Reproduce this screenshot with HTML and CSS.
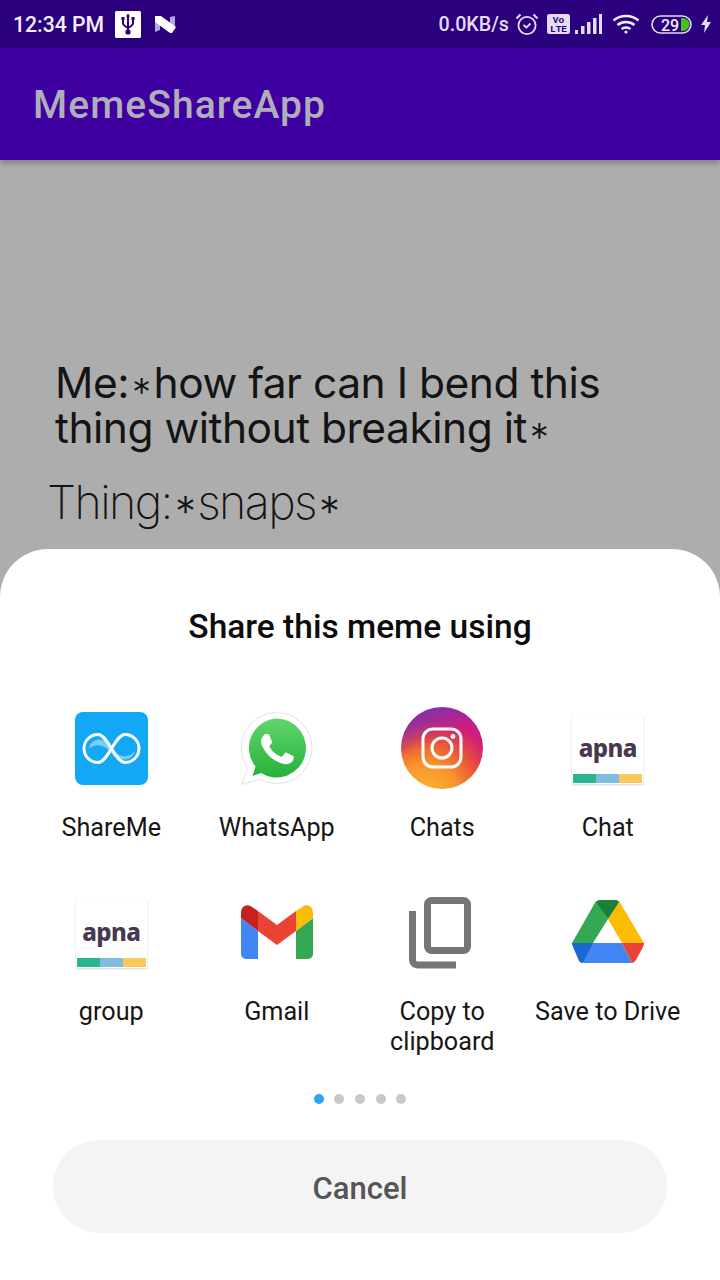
FILE: index.html

```html
<!DOCTYPE html>
<html lang="en">
<head>
  <meta charset="UTF-8">
  <title>MemeShareApp</title>
  <link rel="stylesheet" href="styles.css">
</head>
<body>
  <div class="phone">
    <div class="status-bar">
      <div class="status-left">
        <span class="clock">12:34 PM</span>
        <svg class="usb-icon" viewBox="0 0 26 27">
          <rect width="26" height="27" rx="1.5" fill="#fff"/>
          <path d="M13 4v17M8 8v4q0 2 2 3l3 2 3-2q2-1 2-3V8" fill="none" stroke="#2a007c" stroke-width="2"/>
          <circle cx="13" cy="21" r="2.6" fill="#2a007c"/>
          <rect x="6.500" y="6" width="3" height="3" fill="#2a007c"/>
          <rect x="16.500" y="6" width="3" height="3" fill="#2a007c"/>
          <path d="M13 2.500l2 3h-4z" fill="#2a007c"/>
        </svg>
        <svg class="n-icon" viewBox="0 0 22 18">
          <path d="M1 1l5 1v13l-5 2z" fill="#b5a6dc"/>
          <path d="M16 2l5-1v13l-5 2z" fill="#b5a6dc"/>
          <path d="M1 1h6l15 11-4 6h-2L1 7z" fill="#fff"/>
        </svg>
      </div>
      <div class="status-right">
        <span class="speed">0.0KB/s</span>
        <svg class="alarm-icon" viewBox="0 0 24 24" fill="none" stroke="#e4dcf4" stroke-width="1.8">
          <circle cx="12" cy="13.500" r="8.600"/>
          <path d="M8.500 13l3 2.500 4-4"/>
          <path d="M1.500 6.500l4-4M22.500 6.500l-4-4" stroke-width="2.2"/>
        </svg>
        <svg class="volte-icon" viewBox="0 0 23 20">
          <rect width="23" height="20" rx="2.500" fill="#e4dcf4"/>
          <text x="11.500" y="9" class="volte-text">Vo</text>
          <text x="11.500" y="18" class="volte-text">LTE</text>
        </svg>
        <svg class="signal-icon" viewBox="0 0 27 20" fill="#e4dcf4">
          <rect x="0" y="16" width="3" height="4"/>
          <rect x="6" y="12" width="3.500" height="8"/>
          <rect x="12" y="8" width="3.500" height="12"/>
          <rect x="18" y="4" width="3.500" height="16"/>
          <rect x="24" y="0" width="3" height="20"/>
        </svg>
        <svg class="wifi-icon" viewBox="0 0 28 20" fill="none" stroke="#f1edf9" stroke-width="2.600">
          <path d="M1.500 6.500c7-6 18-6 25 0"/>
          <path d="M5.500 11c5-4 12-4 17 0"/>
          <path d="M9.500 15c3-2 6-2 9 0"/>
          <circle cx="14" cy="18" r="1.600" fill="#f1edf9" stroke="none"/>
        </svg>
        <svg class="battery-icon" viewBox="0 0 42 19">
          <rect x="1" y="1" width="39" height="17" rx="8.500" fill="none" stroke="#e4dcf4" stroke-width="1.600"/>
          <path d="M30 3h2a6.500 6.500 0 0 1 0 13h-2z" fill="#45c01e"/>
          <text x="19" y="15.500" class="battery-text">29</text>
        </svg>
        <svg class="bolt-icon" viewBox="0 0 12 18">
          <path d="M8 0L1 10h4l-1 8 7-11H7z" fill="#e4dcf4"/>
        </svg>
      </div>
    </div>

    <div class="app-bar">MemeShareApp</div>

    <div class="meme">
      <p class="meme-line">Me:<span class="star">*</span>how far can I bend this thing without breaking it<span class="star">*</span></p>
      <p class="meme-thing">Thing:<span class="star">*</span>snaps<span class="star">*</span></p>
    </div>

    <div class="sheet">
      <h2 class="sheet-title">Share this meme using</h2>
      <div class="app-grid">
        <div class="app">
          <div class="app-icon">
            <svg width="73" height="73" viewBox="0 0 73 73">
              <rect width="73" height="73" rx="8" fill="#12a8f6"/>
              <path d="M14 36c2-9 12-11 18-5l5 6c4 4 6 6 10 7 5 1 11-1 13-6-1 8-8 10-13 9.500-6 0-9-4-13-9-5-5-12-8-20-2z" fill="#7accfa"/>
              <path d="M36.500 36.500C32 29 28 22.500 23 22.500c-7.500 0-14 6-14 14s6.500 14 14 14c5 0 9-6.500 13.500-14S45 22.500 50 22.500c7.500 0 14 6 14 14s-6.500 14-14 14c-5 0-9-6.500-13.500-14z" fill="none" stroke="#fff" stroke-width="3"/>
            </svg>
          </div>
          <div class="app-label">ShareMe</div>
        </div>
        <div class="app">
          <div class="app-icon">
            <svg width="73" height="73" viewBox="0 0 72 73">
              <defs>
                <linearGradient id="waGreen" x1="0" y1="0" x2="0" y2="1">
                  <stop offset="0" stop-color="#62d56e"/>
                  <stop offset="1" stop-color="#26b23a"/>
                </linearGradient>
              </defs>
              <path d="M36 0.500a35.500 35.500 0 1 1-17 66.700L1.500 72.500l5.500-16A35.500 35.500 0 0 1 36 0.500z" fill="#fff" stroke="#e2e2e2" stroke-width="1"/>
              <path d="M36 6.500a29.500 29.500 0 1 1-15.500 54.600L12 64l3-9.500A29.500 29.500 0 0 1 36 6.500z" fill="url(#waGreen)"/>
              <g transform="translate(4.400 4.600) scale(2.7)">
                <path d="M17.472 14.382c-.297-.149-1.758-.867-2.03-.967-.273-.099-.471-.148-.67.15-.197.297-.767.966-.94 1.164-.173.199-.347.223-.644.075-.297-.15-1.255-.463-2.39-1.475-.883-.788-1.48-1.761-1.653-2.059-.173-.297-.018-.458.13-.606.134-.133.298-.347.446-.52.149-.174.198-.298.298-.497.099-.198.05-.371-.025-.52-.075-.149-.669-1.612-.916-2.207-.242-.579-.487-.5-.669-.51-.173-.008-.371-.01-.57-.01-.198 0-.52.074-.792.372-.272.297-1.04 1.016-1.04 2.479 0 1.462 1.065 2.875 1.213 3.074.149.198 2.096 3.2 5.077 4.487.709.306 1.262.489 1.694.625.712.227 1.36.195 1.871.118.571-.085 1.758-.719 2.006-1.413.248-.694.248-1.289.173-1.413-.074-.124-.272-.198-.57-.347z" fill="#fff"/>
              </g>
            </svg>
          </div>
          <div class="app-label">WhatsApp</div>
        </div>
        <div class="app">
          <div class="app-icon">
            <div class="insta">
              <svg width="82" height="82" viewBox="0 0 82 82" fill="none" stroke="#fff">
                <rect x="22" y="22" width="38" height="38" rx="10" stroke-width="3"/>
                <circle cx="41" cy="41" r="10" stroke-width="3"/>
                <circle cx="52" cy="29.500" r="2.400" fill="#fff" stroke="none"/>
              </svg>
            </div>
          </div>
          <div class="app-label">Chats</div>
        </div>
        <div class="app">
          <div class="app-icon">
            <div class="apna">
              <span class="apna-name">apna</span>
              <div class="apna-bars"><i class="bar-green"></i><i class="bar-blue"></i><i class="bar-yellow"></i></div>
            </div>
          </div>
          <div class="app-label">Chat</div>
        </div>

        <div class="app">
          <div class="app-icon">
            <div class="apna">
              <span class="apna-name">apna</span>
              <div class="apna-bars"><i class="bar-green"></i><i class="bar-blue"></i><i class="bar-yellow"></i></div>
            </div>
          </div>
          <div class="app-label">group</div>
        </div>
        <div class="app">
          <div class="app-icon">
            <svg width="72" height="54" viewBox="0 0 72 54">
              <path d="M0 13l17 13v28H5a5 5 0 0 1-5-5z" fill="#4285f4"/>
              <path d="M55 26l17-13v36a5 5 0 0 1-5 5H55z" fill="#34a853"/>
              <path d="M55 6l6-4c5-4 11-1 11 6v5L55 26z" fill="#fbbc04"/>
              <path d="M0 13V8C0 1 6-2 11 2l6 4v20z" fill="#c5221f"/>
              <path d="M17 6l19 14L55 6v20L36 40 17 26z" fill="#ea4335"/>
            </svg>
          </div>
          <div class="app-label">Gmail</div>
        </div>
        <div class="app">
          <div class="app-icon">
            <svg class="copy-icon" width="62" height="72" viewBox="0 0 62 72" fill="none" stroke="#757575" stroke-width="7">
              <rect x="18.500" y="3.500" width="40" height="50" rx="4"/>
              <path d="M3.500 14v49a5 5 0 0 0 5 5H47"/>
            </svg>
          </div>
          <div class="app-label">Copy to clipboard</div>
        </div>
        <div class="app">
          <div class="app-icon">
            <svg width="72" height="64" viewBox="0 0 72 64">
              <path d="M24 1L36 19 21 43H0z" fill="#34a853"/>
              <path d="M47 1l25 42H50L36 19z" fill="#fbbc04"/>
              <path d="M24 2q1-2 4-2h16q2 0 3 2L36 19z" fill="#188038"/>
              <path d="M0 43h22L11 63q-3 0-4-2L1 47q-1-2-1-4z" fill="#1967d2"/>
              <path d="M21 43h29l10 20H11z" fill="#4285f4"/>
              <path d="M50 43h22q0 2-1 4l-7 13q-2 3-4 3z" fill="#ea4335"/>
            </svg>
          </div>
          <div class="app-label">Save to Drive</div>
        </div>
      </div>

      <div class="dots">
        <span class="dot dot-active"></span>
        <span class="dot"></span>
        <span class="dot"></span>
        <span class="dot"></span>
        <span class="dot"></span>
      </div>

      <button class="cancel-btn">Cancel</button>
    </div>
  </div>
</body>
</html>
```

FILE: styles.css

```css
* { box-sizing: border-box; }
html, body { margin: 0; padding: 0; }
body { font-family: Roboto, "Liberation Sans", sans-serif; background: #adadad; }
.phone { width: 720px; height: 1280px; display: flex; flex-direction: column; overflow: hidden; background: #adadad; }

/* status bar */
.status-bar { height: 48px; flex: none; background: #2a007c; display: flex; justify-content: space-between; align-items: center; padding: 0 8px 0 13px; }
.status-left, .status-right { display: flex; align-items: center; }
.clock { color: #f2eefa; font-size: 21.200px; font-weight: 500; margin-right: 11px; }
.usb-icon { width: 26px; height: 27px; margin-right: 13px; }
.n-icon { width: 22px; height: 18px; }
.speed { color: #e4dcf4; font-size: 19.700px; font-weight: 500; margin-right: 6px; }
.alarm-icon { width: 24px; height: 24px; margin-right: 8px; }
.volte-icon { width: 23px; height: 20px; margin-right: 5px; }
.volte-text { font-family: "Liberation Mono", monospace; font-size: 9.500px; font-weight: 700; fill: #2a007c; text-anchor: middle; }
.signal-icon { width: 27px; height: 20px; margin-right: 10px; }
.wifi-icon { width: 28px; height: 20px; margin-right: 11px; }
.battery-icon { width: 42px; height: 19px; margin-right: 7px; }
.battery-text { font-family: Roboto, sans-serif; font-size: 16px; font-weight: 500; fill: #f1edf9; text-anchor: middle; }
.bolt-icon { width: 12px; height: 18px; }

/* app bar */
.app-bar { height: 112px; flex: none; background: #3f00a2; color: #b0aeb8; font-size: 39px; font-weight: 500; letter-spacing: 1.1px; display: flex; align-items: center; padding: 2px 0 0 33px; box-shadow: 0 3px 6px rgba(0,0,0,0.25); position: relative; }

/* meme behind the sheet */
.meme { flex: 1; padding: 200px 0 0 55px; color: #141414; overflow: hidden; }
.meme p { margin: 0; }
.meme-line { width: 560px; font-family: Inter, sans-serif; font-size: 42.500px; line-height: 45px; font-weight: 400; letter-spacing: -0.5px; }
.meme-thing { font-family: Inter, sans-serif; font-size: 46.500px; line-height: 50px; font-weight: 200; letter-spacing: -1.6px; margin: 27px 0 0 -8px !important; white-space: nowrap; }
.star { font-size: 0.9em; font-weight: 300; line-height: 0; vertical-align: -0.2em; margin: 0 3px; }

/* bottom sheet */
.sheet { height: 731px; flex: none; background: #fff; border-radius: 48px 48px 0 0; padding-top: 58px; display: flex; flex-direction: column; }
.sheet-title { margin: 0; height: 40px; line-height: 40px; text-align: center; font-size: 33.500px; font-weight: 500; color: #0c0c0c; }
.app-grid { display: grid; grid-template-columns: repeat(4, 1fr); grid-auto-rows: 184px; padding: 0 29.500px 0 28.500px; margin-top: 60px; }
.app { display: flex; flex-direction: column; align-items: center; }
.app-icon { height: 82px; display: flex; align-items: center; justify-content: center; flex: none; }
.app-label { margin-top: 24px; font-size: 25.200px; line-height: 29.500px; color: #161616; text-align: center; width: 160px; }
.copy-icon { margin: 2px 4px 0 0; }

.insta { width: 82px; height: 82px; border-radius: 50%; background: linear-gradient(155deg, #7d31ae 8%, rgba(125,49,174,0) 42%), radial-gradient(circle at 30% 108%, #fdb62f 0%, #f9962c 30%, #ea5238 52%, #d31d78 72%, #a726a0 100%); }

.apna { width: 71px; height: 70px; margin-top: 2px; background: #fff; box-shadow: 0 1px 2px rgba(0,0,0,0.16); display: flex; flex-direction: column; align-items: center; padding: 1px; }
.apna-name { font-family: "Noto Sans", sans-serif; font-size: 24px; font-weight: 800; line-height: 32px; color: #47384f; margin-top: 17px; letter-spacing: -0.6px; }
.apna-bars { display: flex; width: 100%; height: 9px; margin-top: auto; }
.apna-bars i { flex: 1; }
.bar-green { background: #2bb68f; }
.bar-blue { background: #7fbce0; }
.bar-yellow { background: #fbc85a; }

.dots { display: flex; justify-content: center; gap: 10.700px; margin-top: 19px; }
.dot { width: 10px; height: 10px; border-radius: 50%; background: #c8c8c8; }
.dot-active { background: #2ba6f5; }

.cancel-btn { width: 614px; height: 93px; margin: 36px 0 0 53px; padding: 3px 0 0; border: none; border-radius: 46.500px; background: #f4f4f4; color: #555; font-family: Roboto, sans-serif; font-size: 31px; font-weight: 500; }
```
